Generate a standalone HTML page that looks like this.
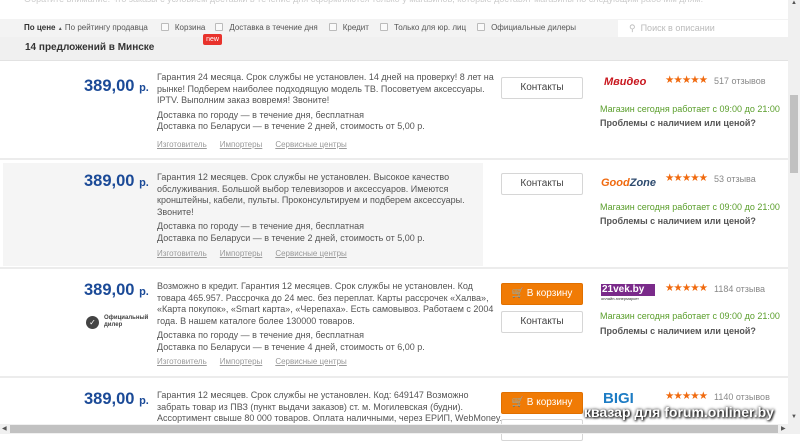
<!DOCTYPE html>
<html><head><meta charset="utf-8"><style>
*{box-sizing:border-box;margin:0;padding:0}
body{width:800px;height:434px;overflow:hidden;background:#fff;font-family:"Liberation Sans",sans-serif;color:#444;position:relative}
.a{position:absolute;white-space:nowrap}
.desc{position:absolute;left:157px;font-size:9px;line-height:11.6px;color:#555;white-space:nowrap}
.price{position:absolute;left:84px;font-size:16.5px;font-weight:bold;color:#1b4a97}
.price span{font-size:11px}
.btn{position:absolute;left:501px;width:82px;height:22px;border:1px solid #d6d6d6;border-radius:2px;background:#fff;font-size:10px;color:#444;text-align:center;line-height:20px}
.cart{background:#f07b05;border-color:#e07000;color:#fff}
.links{position:absolute;left:157px;font-size:8px;color:#999;text-decoration:underline;word-spacing:0}
.links i{font-style:normal;margin-right:13px}
.stars{position:absolute;left:665px;color:#f06a0f;font-size:10.5px;letter-spacing:-1px}
.rev{position:absolute;left:714px;font-size:9px;color:#888}
.green{position:absolute;left:600px;font-size:9px;color:#5a9e2b}
.prob{position:absolute;left:600px;font-size:9px;color:#555;font-weight:bold}
.sep{position:absolute;left:0;width:788px;height:2px;background:#ececec}
.cb{display:inline-block;width:8px;height:8px;border:1px solid #bbb;border-radius:1px;background:#fafafa;vertical-align:-1px;margin:0 6px 0 11px}
</style></head><body>
<div class="a" style="left:24px;top:-6px;font-size:9px;color:#ccc">Обратите внимание: что заказы с условием доставки в течение дня оформляются только у магазинов, которые доставят магазины по следующим рабочим дням.</div>
<div class="a" style="left:0;top:19px;width:788px;height:18px;background:#f3f3f3;font-size:8px;color:#555;line-height:18px;padding-left:24px">
<b style="color:#333">По цене</b> <span style="font-size:5px">▲</span> По рейтингу продавца<span class="cb" style="margin-left:13px"></span>Корзина<span class="cb" style="margin-left:10px"></span>Доставка в течение дня<span class="cb"></span>Кредит<span class="cb"></span>Только для юр. лиц<span class="cb"></span>Официальные дилеры</div>
<div class="a" style="left:618px;top:20px;width:170px;height:17px;background:#fff"></div>
<div class="a" style="left:629px;top:23px;font-size:9px;color:#bbb">⚲ &nbsp;Поиск в описании</div>
<div class="a" style="left:0;top:37px;width:788px;height:24px;background:#f0f0f0;border-bottom:1px solid #e2e2e2;font-size:10px;font-weight:bold;color:#333;line-height:22px;padding-left:25px">14 предложений в Минске</div>
<div class="a" style="left:203px;top:34px;width:19px;height:11px;background:#e8322c;border-radius:2px;color:#fff;font-size:7px;text-align:center;line-height:11px">new</div>

<!-- row1 -->
<div class="price" style="top:77px">389,00 <span>р.</span></div>
<div class="desc" style="top:72px">Гарантия 24 месяца. Срок службы не установлен. 14 дней на проверку! 8 лет на<br>рынке! Подберем наиболее подходящую модель ТВ. Посоветуем аксессуары.<br>IPTV. Выполним заказ вовремя! Звоните!<br><div style="height:3px"></div>Доставка по городу — в течение дня, бесплатная<br>Доставка по Беларуси — в течение 2 дней, стоимость от 5,00 р.</div>
<div class="links" style="top:140px"><i>Изготовитель</i><i>Импортеры</i><i>Сервисные центры</i></div>
<div class="btn" style="top:77px">Контакты</div>
<div class="a" style="left:604px;top:76px;font-size:11px;font-weight:bold;color:#c8161d;font-style:italic">Мвидео</div>
<div class="stars" style="top:74px">★★★★★</div><div class="rev" style="top:76px">517 отзывов</div>
<div class="green" style="top:104px">Магазин сегодня работает с 09:00 до 21:00</div>
<div class="prob" style="top:118px">Проблемы с наличием или ценой?</div>
<div class="sep" style="top:158px"></div>

<!-- row2 -->
<div class="a" style="left:3px;top:163px;width:480px;height:103px;background:#f5f5f5"></div>
<div class="price" style="top:172px">389,00 <span>р.</span></div>
<div class="desc" style="top:172px">Гарантия 12 месяцев. Срок службы не установлен. Высокое качество<br>обслуживания. Большой выбор телевизоров и аксессуаров. Имеются<br>кронштейны, кабели, пульты. Проконсультируем и подберем аксессуары.<br>Звоните!<br><div style="height:3px"></div>Доставка по городу — в течение дня, бесплатная<br>Доставка по Беларуси — в течение 2 дней, стоимость от 5,00 р.</div>
<div class="links" style="top:249px"><i>Изготовитель</i><i>Импортеры</i><i>Сервисные центры</i></div>
<div class="btn" style="top:173px">Контакты</div>
<div class="a" style="left:601px;top:177px;font-size:11px;font-weight:bold;font-style:italic;color:#f06a0f">Good<span style="color:#2d4a6e">Zone</span></div>
<div class="stars" style="top:172px">★★★★★</div><div class="rev" style="top:174px">53 отзыва</div>
<div class="green" style="top:202px">Магазин сегодня работает с 09:00 до 21:00</div>
<div class="prob" style="top:216px">Проблемы с наличием или ценой?</div>
<div class="sep" style="top:267px"></div>

<!-- row3 -->
<div class="price" style="top:281px">389,00 <span>р.</span></div>
<div class="a" style="left:86px;top:316px;width:13px;height:13px;border-radius:50%;background:#444;color:#fff;font-size:8px;text-align:center;line-height:13px">✓</div>
<div class="a" style="left:104px;top:315px;font-size:6px;font-weight:bold;color:#444;line-height:7px">Официальный<br>дилер</div>
<div class="desc" style="top:281px">Возможно в кредит. Гарантия 12 месяцев. Срок службы не установлен. Код<br>товара 465.957. Рассрочка до 24 мес. без переплат. Карты рассрочек «Халва»,<br>«Карта покупок», «Smart карта», «Черепаха». Есть самовывоз. Работаем с 2004<br>года. В нашем каталоге более 130000 товаров.<br><div style="height:3px"></div>Доставка по городу — в течение дня, бесплатная<br>Доставка по Беларуси — в течение 4 дней, стоимость от 6,00 р.</div>
<div class="links" style="top:357px"><i>Изготовитель</i><i>Импортеры</i><i>Сервисные центры</i></div>
<div class="btn cart" style="top:283px">🛒 В корзину</div>
<div class="btn" style="top:311px">Контакты</div>
<div class="a" style="left:601px;top:284px;width:54px;height:12px;background:#7a2a8a;color:#fff;font-size:10px;font-weight:bold;line-height:12px;padding-left:1px">21vek.by</div>
<div class="a" style="left:601px;top:296px;font-size:4px;color:#333">онлайн-гипермаркет</div>
<div class="stars" style="top:282px">★★★★★</div><div class="rev" style="top:284px">1184 отзыва</div>
<div class="green" style="top:311px">Магазин сегодня работает с 09:00 до 21:00</div>
<div class="prob" style="top:326px">Проблемы с наличием или ценой?</div>
<div class="sep" style="top:376px"></div>

<!-- row4 -->
<div class="price" style="top:390px">389,00 <span>р.</span></div>
<div class="desc" style="top:390px">Гарантия 12 месяцев. Срок службы не установлен. Код: 649147 Возможно<br>забрать товар из ПВЗ (пункт выдачи заказов) ст. м. Могилевская (будни).<br>Ассортимент свыше 80 000 товаров. Оплата наличными, через ЕРИП, WebMoney.</div>
<div class="btn cart" style="top:392px">🛒 В корзину</div>
<div class="btn" style="top:419px">Контакты</div>
<div class="a" style="left:603px;top:390px;font-size:15px;font-weight:bold;color:#1d7cc4">BIGI</div>
<div class="stars" style="top:390px">★★★★★</div><div class="rev" style="top:392px">1140 отзывов</div>
<div class="a" style="left:584px;top:404px;font-size:14px;font-weight:bold;color:#fff;text-shadow:0 0 3px #000,1px 1px 2px #000">квазар для forum.onliner.by</div>

<!-- scrollbars -->
<div class="a" style="left:788px;top:0;width:12px;height:424px;background:#f0f0f0"></div>
<div class="a" style="left:790px;top:95px;width:8px;height:78px;background:#c1c1c1"></div>
<div class="a" style="left:791px;top:0;font-size:6px;color:#555">▲</div>
<div class="a" style="left:791px;top:414px;font-size:6px;color:#555">▼</div>
<div class="a" style="left:0;top:424px;width:800px;height:10px;background:#f0f0f0"></div>
<div class="a" style="left:10px;top:425px;width:768px;height:8px;background:#c1c1c1"></div>
<div class="a" style="left:2px;top:425px;font-size:6px;color:#555">◀</div>
<div class="a" style="left:781px;top:425px;font-size:6px;color:#555">▶</div>
</body></html>
